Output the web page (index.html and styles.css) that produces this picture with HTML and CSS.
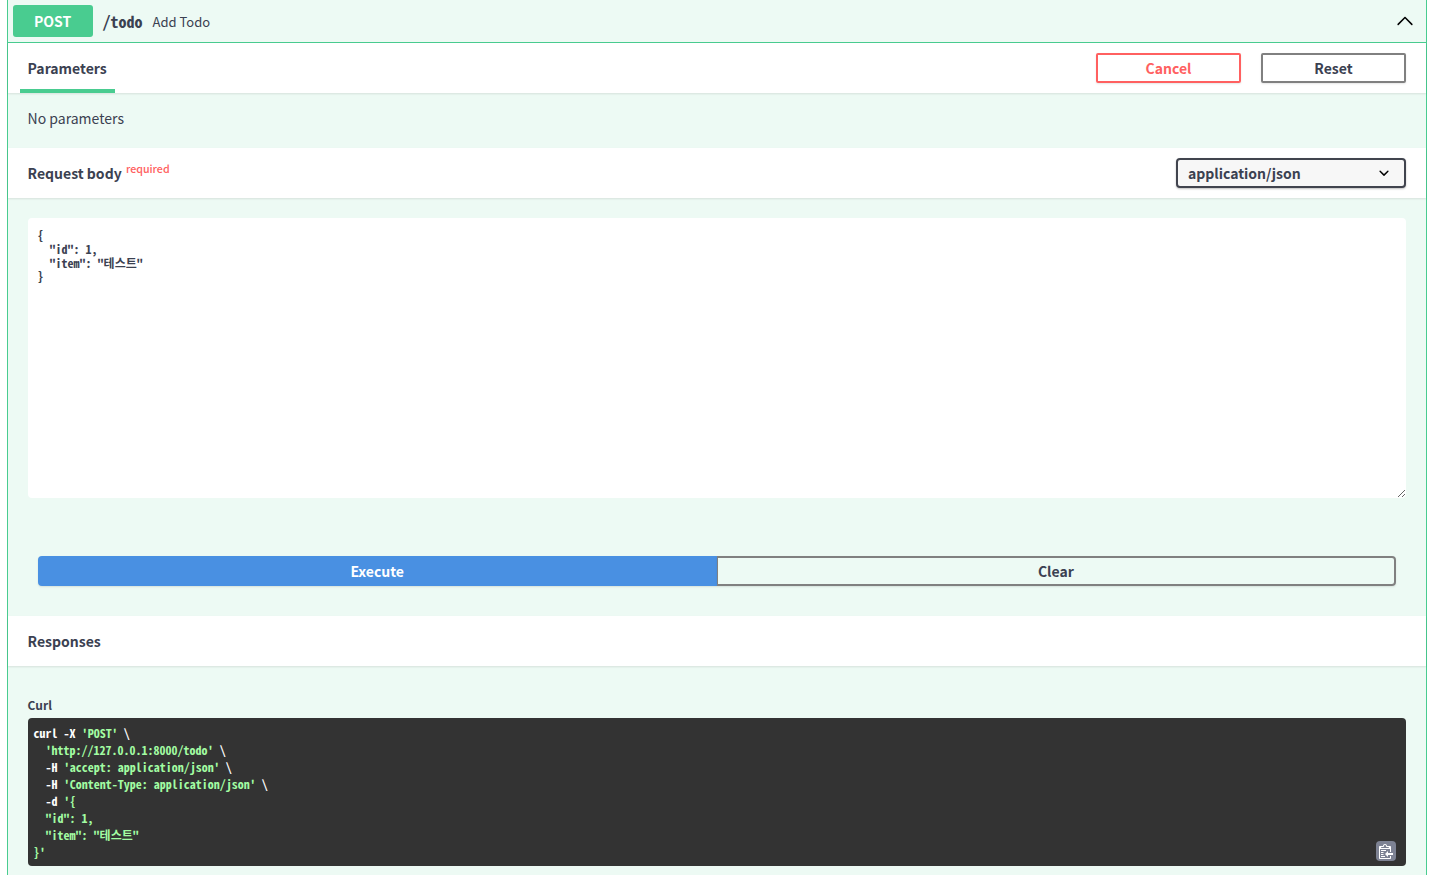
FILE: index.html
```html
<!DOCTYPE html>
<html lang="en">
<head>
    <meta charset="UTF-8">
    <meta name="viewport" content="width=device-width, initial-scale=1.0">
    <title>POST /todo</title>
    <link rel="stylesheet" href="styles.css">
</head>
<body>
    <div class="opblock">
        <div class="opblock-summary">
            <span class="method">POST</span>
            <span class="path">/todo</span>
            <span class="description">Add Todo</span>
            <svg class="arrow" width="20" height="20" viewBox="0 0 20 20"><path d="M17.418 14.908c-.311.311-.815.311-1.126 0L10 8.615l-6.292 6.293c-.311.311-.815.311-1.126 0-.311-.311-.311-.815 0-1.126l6.855-6.855c.311-.311.815-.311 1.126 0l6.855 6.855c.311.311.311.815 0 1.126z"/></svg>
        </div>

        <div class="section-header">
            <div class="tab">Parameters</div>
            <div class="header-actions">
                <button class="btn btn-cancel">Cancel</button>
                <button class="btn btn-reset">Reset</button>
            </div>
        </div>
        <div class="no-params">No parameters</div>

        <div class="section-header">
            <div class="section-title">Request body <span class="required">required</span></div>
            <div class="select-box">
                <span>application/json</span>
                <svg width="20" height="20" viewBox="0 0 20 20"><path d="M13.418 7.859a.695.695 0 0 1 .978 0 .68.68 0 0 1 0 .969l-3.908 3.83a.697.697 0 0 1-.979 0l-3.908-3.83a.68.68 0 0 1 0-.969.695.695 0 0 1 .978 0L10 11l3.418-3.141z"/></svg>
            </div>
        </div>
        <div class="body-section">
            <textarea class="body-input" spellcheck="false">{
  "id": 1,
  "item": "테스트"
}</textarea>
        </div>

        <div class="execute-row">
            <button class="btn-execute">Execute</button>
            <button class="btn-clear">Clear</button>
        </div>

        <div class="section-header">
            <div class="section-title">Responses</div>
        </div>
        <div class="responses-inner">
            <h4 class="curl-label">Curl</h4>
            <div class="curl-box">
                <pre class="curl"><span class="plain">curl -X</span> <span class="str">'POST'</span> <span class="plain">\</span>
  <span class="str">'http://127.0.0.1:8000/todo'</span> <span class="plain">\</span>
  <span class="plain">-H</span> <span class="str">'accept: application/json'</span> <span class="plain">\</span>
  <span class="plain">-H</span> <span class="str">'Content-Type: application/json'</span> <span class="plain">\</span>
  <span class="plain">-d</span> <span class="str">'{</span>
  <span class="str">"id": 1,</span>
  <span class="str">"item": "테스트"</span>
<span class="str">}'</span></pre>
                <div class="copy-btn">
                    <svg width="15" height="16" viewBox="0 0 15 16"><path fill-rule="evenodd" d="M2 13h4v1H2v-1zm5-6H2v1h5V7zm2 3V8l-3 3 3 3v-2h5v-2H9zM4.5 9H2v1h2.5V9zM2 12h2.5v-1H2v1zm9 1h1v2c-.02.28-.11.52-.3.7-.19.18-.42.28-.7.3H1c-.55 0-1-.45-1-1V4c0-.55.45-1 1-1h3c0-1.11.89-2 2-2 1.11 0 2 .89 2 2h3c.55 0 1 .45 1 1v5h-1V6H1v9h10v-2zM2 5h8c0-.55-.45-1-1-1H8c-.55 0-1-.45-1-1s-.45-1-1-1-1 .45-1 1-.45 1-1 1H3c-.55 0-1 .45-1 1z"/></svg>
                </div>
            </div>
        </div>
    </div>
</body>
</html>
```

FILE: styles.css
```css
:root {
    --green: #49cc90;
    --tint: #edfaf4;
    --text: #3b4151;
    --mono: "Noto Sans Mono CJK KR", "DejaVu Sans Mono", monospace;
}

* {
    box-sizing: border-box;
    margin: 0;
    padding: 0;
    font-family: "Noto Sans CJK KR", "Noto Sans", sans-serif;
}

html, body {
    height: 875px;
    overflow: hidden;
}

body {
    background: white;
    color: var(--text);
}

.opblock {
    margin: 0 9px 0 6.6px;
    height: 900px;
    background: var(--tint);
    border: 1px solid var(--green);
    border-top: none;
    border-radius: 0 0 4px 4px;
}

.opblock-summary {
    display: flex;
    align-items: center;
    height: 43px;
    padding: 5px 11px 5px 5px;
    border-bottom: 1px solid var(--green);
}

.method {
    width: 80px;
    height: 32px;
    line-height: 32px;
    text-align: center;
    background: var(--green);
    color: white;
    font-size: 14px;
    font-weight: 700;
    border-radius: 3px;
}

.path {
    margin-left: 10px;
    font-family: var(--mono);
    font-size: 16px;
    font-weight: 600;
}

.description {
    margin-left: 10px;
    font-size: 13px;
    flex: 1;
}

.arrow {
    display: block;
    margin-top: -3px;
}

.section-header {
    display: flex;
    justify-content: space-between;
    align-items: center;
    height: 50px;
    padding: 0 20px;
    background: rgba(255,255,255,0.98);
    box-shadow: 0 1px 2px rgba(0,0,0,0.1);
    position: relative;
}

.tab {
    align-self: stretch;
    margin-left: -8px;
    padding: 0 8px;
    line-height: 50px;
    font-size: 14px;
    font-weight: 700;
    border-bottom: 4px solid var(--green);
}

.header-actions {
    display: flex;
    gap: 20px;
}

.btn {
    width: 145px;
    height: 30px;
    background: transparent;
    border: 2px solid gray;
    border-radius: 2px;
    font-size: 14px;
    font-weight: 700;
    color: var(--text);
    box-shadow: 0 1px 2px rgba(0,0,0,0.1);
}

.btn-cancel {
    border-color: #ff6060;
    color: #ff6060;
}

.no-params {
    height: 55px;
    padding: 15px 20px;
    font-size: 14px;
    line-height: 20px;
}

.section-title {
    font-size: 14px;
    font-weight: 700;
}

.required {
    position: relative;
    top: -6px;
    font-size: 10.7px;
    font-weight: 500;
    color: #ff6060;
    margin-left: 1px;
}

.select-box {
    display: flex;
    justify-content: space-between;
    align-items: center;
    width: 230px;
    height: 30px;
    padding: 0 10px;
    background: #f7f7f7;
    border: 2px solid #41444e;
    border-radius: 4px;
    font-size: 14px;
    font-weight: 600;
    box-shadow: 0 1px 2px rgba(0,0,0,0.25);
}

.body-section {
    height: 338px;
    padding: 20px 20px 0;
}

.body-input {
    display: block;
    width: 100%;
    height: 280px;
    padding: 10.3px 10px 10px;
    border: none;
    outline: none;
    border-radius: 4px;
    background: rgba(255,255,255,0.98);
    color: var(--text);
    font-family: var(--mono);
    font-size: 12px;
    font-weight: 600;
    line-height: 13.7px;
}

.execute-row {
    display: flex;
    height: 80px;
    padding: 20px 30px 0;
}

.btn-execute, .btn-clear {
    width: 50%;
    height: 30px;
    font-size: 14px;
    font-weight: 700;
    box-shadow: 0 1px 2px rgba(0,0,0,0.1);
}

.btn-execute {
    background: #4990e2;
    color: white;
    border: 2px solid #4990e2;
    border-radius: 4px 0 0 4px;
}

.btn-clear {
    background: transparent;
    color: var(--text);
    border: 2px solid gray;
    border-left-width: 1px;
    border-radius: 0 4px 4px 0;
}

.responses-inner {
    padding: 30px 20px 0;
}

.curl-label {
    font-size: 12px;
    font-weight: 700;
    line-height: 18px;
    margin-bottom: 4px;
}

.curl-box {
    position: relative;
    height: 148px;
    background: #333;
    border-radius: 4px;
}

.curl {
    padding: 6px;
    font-family: var(--mono);
    font-size: 12px;
    font-weight: 700;
    line-height: 17px;
    color: white;
}

.curl .plain {
    font-family: var(--mono);
    color: white;
}

.curl .str {
    font-family: var(--mono);
    color: #a2fca2;
}

.copy-btn {
    position: absolute;
    right: 10px;
    bottom: 5px;
    width: 20px;
    height: 20px;
    display: flex;
    align-items: center;
    justify-content: center;
    padding-left: 1px;
    background: #7d8293;
    border-radius: 4px;
}

.copy-btn svg {
    fill: white;
}
```
